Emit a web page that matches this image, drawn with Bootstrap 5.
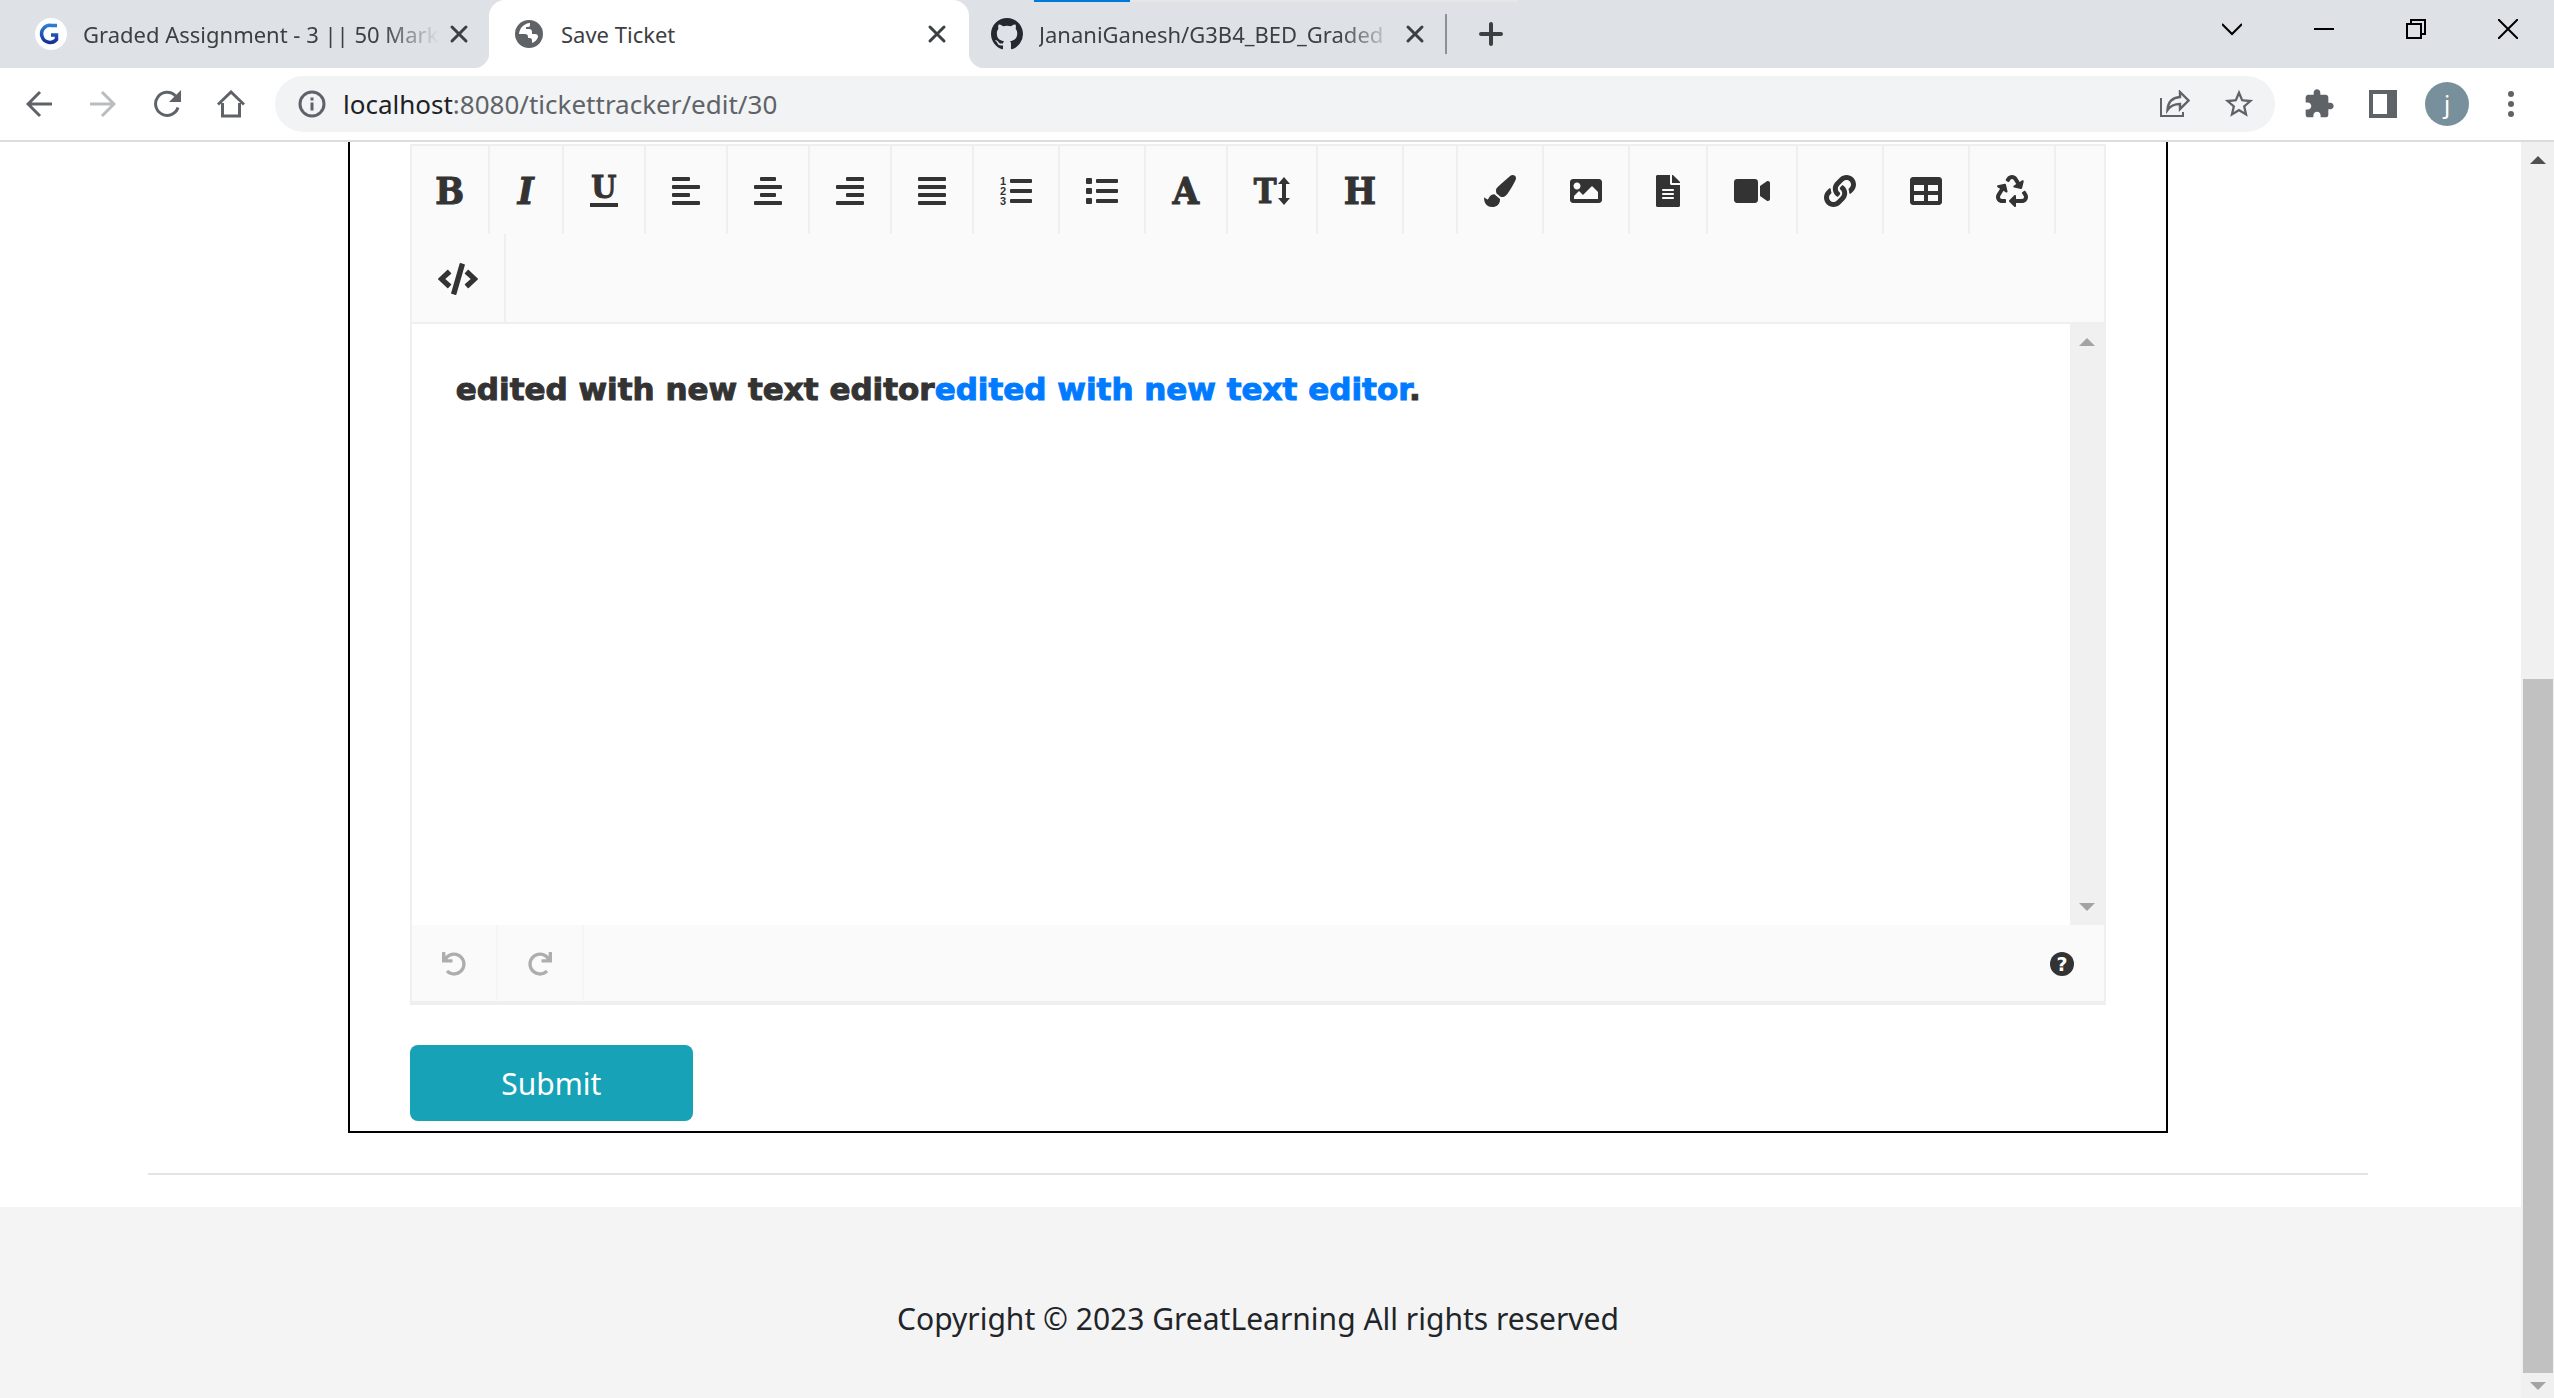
<!DOCTYPE html>
<html lang="en">
<head>
<meta charset="utf-8">
<meta name="viewport" content="width=device-width, initial-scale=1">
<title>Save Ticket</title>
<link href="https://cdn.jsdelivr.net/npm/bootstrap@5.3.0/dist/css/bootstrap.min.css" rel="stylesheet">
<style>
  body { font-family: "Noto Sans", "Open Sans", sans-serif; color: #212529; background: #fff; }
  svg { display: block; flex: none; }
  button { color: inherit; }
  .bare { border: 0; background: none; padding: 0; display: flex; align-items: center; justify-content: center; flex: none; }

  /* tab strip */
  .tab-strip { height: 68px; background: #dee1e6; padding-left: 11px; color: #3c4043; }
  .load-track { position: absolute; top: 0; left: 1034px; width: 484px; height: 2px; background: #e6e6e6; }
  .load-bar { width: 96px; height: 2px; background: #0078d7; }
  .win-tab { width: 478px; padding: 0 18px 0 24px; gap: 16px; font-size: 22px; line-height: 32px; position: relative; }
  .win-tab.current { width: 480px; margin-right: -2px; padding-right: 20px; background: #fff; border-radius: 16px 16px 0 0; }
  .win-tab.current::before, .win-tab.current::after { content: ""; position: absolute; bottom: 0; width: 16px; height: 16px; }
  .win-tab.current::before { left: -16px; background: radial-gradient(circle at 0 0, transparent 16px, #fff 17px); }
  .win-tab.current::after { right: -16px; background: radial-gradient(circle at 100% 0, transparent 16px, #fff 17px); }
  .tab-title { flex: 1 1 0; min-width: 0; overflow: hidden; white-space: nowrap; }
  .tab-title.faded { -webkit-mask-image: linear-gradient(to right, #000 calc(100% - 60px), transparent calc(100% - 4px)); mask-image: linear-gradient(to right, #000 calc(100% - 60px), transparent calc(100% - 4px)); }
  .tab-shut { width: 24px; height: 24px; margin-left: -12px; }
  .tab-rule { width: 2px; height: 40px; background: #8d9196; }
  .tab-plus { width: 88px; height: 68px; }
  .win-btn { width: 92px; height: 58px; color: #000; }

  /* address row */
  .address-row { height: 74px; padding: 8px 11px 8px 7px; border-bottom: 2px solid #dcdcdc; color: #5f6368; }
  .tool-cell { width: 64px; height: 56px; }
  .omnibox { height: 56px; margin: 0 12px; padding: 0 4px 0 23px; border-radius: 28px; background: #f1f3f4; }
  .omni-text { margin-left: 17px; font-size: 26px; line-height: 36px; color: #5f6368; }
  .omni-text b { font-weight: 400; color: #202124; }
  .avatar-dot { width: 44px; height: 44px; border-radius: 50%; background: #78909c; color: #fff; font-size: 24px; line-height: 32px; }

  /* page */
  .view { min-height: 0; }
  .sheet { min-width: 0; overflow: hidden; }
  .sheet-wrap { width: 100%; max-width: 2220px; margin: 0 auto; }
  .shifted { padding-right: 5px; }
  .ticket-frame { margin: 0 9%; border: 2px solid #000; border-top: 0; padding: 2px 60px 10px; }
  .sheet-rule { height: 2px; margin: 40px 0 32px; background: #e4e4e4; border: 0; opacity: 1; }
  .editor { border: 2px solid #efefef; border-bottom-width: 4px; color: #333; }
  .editor-tools { background: #fafafa; border-bottom: 2px solid #efefef; }
  .ed-btn { height: 88px; padding: 2px 26px 0; border-right: 2px solid #efefef; min-width: 54px; }
  .glyph { width: 28px; font: 700 38px/32px "DejaVu Serif Condensed", "DejaVu Serif", serif; text-align: center; display: flex; justify-content: center; -webkit-text-stroke: 1px currentColor; }
  .glyph.narrow { width: 24px; }
  .glyph.slant { width: 20px; font-style: italic; }
  .glyph.wide { width: 32px; }
  .glyph.lined { height: 32px; border-bottom: 4px solid #333; font-size: 32px; line-height: 24px; }
  .glyph.tall { width: 36px; justify-content: space-between; font-size: 34px; }
  .editor-body { height: 601px; background: #fff; }
  .editor-text { padding: 43px 44px; font: 700 31px/44px "DejaVu Sans", sans-serif; outline: 0; -webkit-text-stroke: 1px currentColor; }
  .editor-text a { color: #007bff; text-decoration: none; }
  .inner-scroll { width: 34px; background: #f0f0f0; padding: 14px 0; color: #a3a3a3; }
  .editor-foot { height: 76px; background: #fafafa; }
  .foot-btn { height: 76px; padding: 2px 30px 0; border-right: 2px solid #f6f6f6; color: #adadad; }
  .send-btn { width: 283px; height: 76px; margin-top: 40px; padding: 8px 12px 6px; border-radius: 8px; font-size: 30px; line-height: 44px; color: #fff; background: #17a2b8; border: 0; }
  .page-foot { background: #f4f4f4; padding-top: 90px; font-size: 30px; line-height: 44px; }

  /* window scroll bar */
  .outer-scroll { width: 33px; background: #f0f0f0; }
  .scroll-end { height: 25px; color: #a3a3a3; }
  .scroll-end.first { height: 35px; color: #505050; }
  .scroll-thumb { height: 58%; margin: 0 1px 0 2px; background: #c1c1c1; }
</style>
</head>
<body>
<div class="d-flex flex-column vh-100 overflow-hidden">

  <header class="flex-shrink-0">
    <div class="tab-strip d-flex align-items-stretch position-relative">
      <div class="load-track"><div class="load-bar"></div></div>
      <div class="win-tab d-flex align-items-center flex-shrink-0">
        <svg width="32" height="32" viewBox="0 0 32 32"><defs><linearGradient id="gl" x1="0" y1="0" x2="0" y2="1"><stop offset="0" stop-color="#2a7fd4"/><stop offset="1" stop-color="#15309a"/></linearGradient></defs><circle cx="16" cy="16" r="16" fill="#fff"/><path d="M22 7.500H16.500A8.500 8.500 0 1 0 21.500 21.500V17H16" fill="none" stroke="url(#gl)" stroke-width="3.500"/></svg>
        <span class="tab-title faded">Graded Assignment - 3 || 50 Mark</span>
        <button class="bare tab-shut" aria-label="Close tab"><svg width="20" height="20" viewBox="0 0 20 20"><path d="M3 3l14 14M17 3L3 17" stroke="currentColor" stroke-width="3" stroke-linecap="round"/></svg></button>
      </div>
      <div class="win-tab current d-flex align-items-center flex-shrink-0">
        <svg width="32" height="32" viewBox="0 0 32 32"><circle cx="16" cy="16" r="14" fill="#5f6368"/><path d="M17 5c-3 0-7 2-9 5-1 2-2 4-2 6h6c2 0 3 1 3 3v1h2c1 0 2 1 2 2v3c3-1 5-3 6-6 0-2-1-3-3-3h-3v-2c0-2-1-3-3-3h-3v-2h2c2 0 2-1 2-3z" fill="#fff"/></svg>
        <span class="tab-title">Save Ticket</span>
        <button class="bare tab-shut" aria-label="Close tab"><svg width="20" height="20" viewBox="0 0 20 20"><path d="M3 3l14 14M17 3L3 17" stroke="currentColor" stroke-width="3" stroke-linecap="round"/></svg></button>
      </div>
      <div class="win-tab d-flex align-items-center flex-shrink-0">
        <svg width="32" height="32" viewBox="0 0 16 16" fill="#24292f"><path d="M8 0C3.580 0 0 3.580 0 8c0 3.540 2.290 6.530 5.470 7.590.4.070.55-.17.55-.38 0-.19-.01-.82-.01-1.490-2.010.37-2.530-.49-2.690-.94-.09-.23-.48-.94-.82-1.130-.28-.15-.68-.52-.01-.53.63-.01 1.080.58 1.230.82.72 1.210 1.870.87 2.330.66.070-.52.28-.87.51-1.070-1.780-.2-3.640-.89-3.640-3.950 0-.87.31-1.590.82-2.150-.08-.2-.36-1.020.08-2.120 0 0 .67-.21 2.200.82.64-.18 1.320-.27 2-.27s1.360.09 2 .27c1.530-1.040 2.200-.82 2.200-.82.44 1.100.16 1.920.08 2.120.51.56.82 1.270.82 2.150 0 3.070-1.870 3.750-3.650 3.950.29.25.54.73.54 1.480 0 1.070-.01 1.930-.01 2.200 0 .21.15.46.55.38A8.010 8.010 0 0 0 16 8c0-4.420-3.580-8-8-8z"/></svg>
        <span class="tab-title faded">JananiGanesh/G3B4_BED_Graded</span>
        <button class="bare tab-shut" aria-label="Close tab"><svg width="20" height="20" viewBox="0 0 20 20"><path d="M3 3l14 14M17 3L3 17" stroke="currentColor" stroke-width="3" stroke-linecap="round"/></svg></button>
      </div>
      <span class="tab-rule align-self-center"></span>
      <button class="bare tab-plus" aria-label="New tab"><svg width="24" height="24" viewBox="0 0 24 24"><path d="M12 2v20M2 12h20" stroke="currentColor" stroke-width="4" stroke-linecap="round"/></svg></button>
      <div class="d-flex ms-auto">
        <button class="bare win-btn" aria-label="Search tabs"><svg width="20" height="20" viewBox="0 0 20 20"><path d="M0 5l10 10L20 5" fill="none" stroke="currentColor" stroke-width="2"/></svg></button>
        <button class="bare win-btn" aria-label="Minimize"><svg width="20" height="20" viewBox="0 0 20 20"><path d="M0 10h20" stroke="currentColor" stroke-width="2"/></svg></button>
        <button class="bare win-btn" aria-label="Restore"><svg width="20" height="20" viewBox="0 0 20 20"><path d="M1 5h14v14H1zM5 5V1h14v14h-4" fill="none" stroke="currentColor" stroke-width="2"/></svg></button>
        <button class="bare win-btn" aria-label="Close"><svg width="20" height="20" viewBox="0 0 20 20"><path d="M0 0l20 20M20 0L0 20" stroke="currentColor" stroke-width="2"/></svg></button>
      </div>
    </div>

    <nav class="address-row d-flex align-items-center">
      <button class="bare tool-cell" aria-label="Back"><svg width="26" height="28" viewBox="0 0 26 28"><path d="M26 14H3M14 2L2 14l12 12" fill="none" stroke="currentColor" stroke-width="3"/></svg></button>
      <button class="bare tool-cell" aria-label="Forward" disabled><svg width="26" height="28" viewBox="0 0 26 28" color="#babcbe"><path d="M0 14h23M12 2l12 12-12 12" fill="none" stroke="currentColor" stroke-width="3"/></svg></button>
      <button class="bare tool-cell" aria-label="Reload"><svg width="28" height="28" viewBox="0 0 28 28"><path d="M25 17.500A11.500 11.500 0 1 1 22.500 6" fill="none" stroke="currentColor" stroke-width="3"/><path d="M28 0v12H16z" fill="currentColor"/></svg></button>
      <button class="bare tool-cell" aria-label="Home"><svg width="28" height="28" viewBox="0 0 28 28"><path d="M1 14.500L14 2l13 12.500M5.500 13v13h17V13" fill="none" stroke="currentColor" stroke-width="3"/></svg></button>
      <div class="omnibox d-flex align-items-center flex-grow-1">
        <svg width="28" height="28" viewBox="0 0 28 28"><circle cx="14" cy="14" r="12" fill="none" stroke="currentColor" stroke-width="3"/><path d="M14 12.500v8M14 7.500v3" stroke="currentColor" stroke-width="3"/></svg>
        <span class="omni-text flex-grow-1"><b>localhost</b>:8080/tickettracker/edit/30</span>
        <button class="bare tool-cell" aria-label="Share"><svg width="30" height="28" viewBox="0 0 30 28"><path d="M1 8v18h22v-4" fill="none" stroke="currentColor" stroke-width="2"/><path d="M20 2l8.500 8.500L20 19v-5c-5 0-9 1-12.500 6 .5-8 5-12.500 12.500-13z" fill="none" stroke="currentColor" stroke-width="2.400"/></svg></button>
        <button class="bare tool-cell" aria-label="Bookmark"><svg width="34" height="34" viewBox="0 0 24 24" fill="currentColor"><path d="M22 9.240l-7.190-.62L12 2 9.190 8.630 2 9.240l5.460 4.730L5.820 21 12 17.270 18.180 21l-1.630-7.030L22 9.240zM12 15.400l-3.760 2.270 1-4.280-3.320-2.880 4.380-.38L12 6.100l1.710 4.040 4.380.38-3.320 2.880 1 4.280L12 15.400z"/></svg></button>
      </div>
      <button class="bare tool-cell" aria-label="Extensions"><svg width="32" height="32" viewBox="0 0 24 24" fill="currentColor"><path d="M20.500 11H19V7c0-1.100-.9-2-2-2h-4V3.500C13 2.120 11.880 1 10.500 1S8 2.120 8 3.500V5H4c-1.100 0-1.990.9-1.990 2v3.800H3.500c1.490 0 2.700 1.210 2.700 2.700s-1.210 2.700-2.700 2.700H2V20c0 1.100.9 2 2 2h3.800v-1.500c0-1.490 1.210-2.700 2.700-2.700 1.490 0 2.700 1.210 2.700 2.700V22H17c1.100 0 2-.9 2-2v-4h1.500c1.380 0 2.500-1.120 2.500-2.500S21.880 11 20.500 11z"/></svg></button>
      <button class="bare tool-cell" aria-label="Side panel"><svg width="28" height="28" viewBox="0 0 28 28"><path fill="currentColor" fill-rule="evenodd" d="M0 0h28v28H0zM4 4v20h14V4z"/></svg></button>
      <button class="bare tool-cell" aria-label="Profile"><span class="avatar-dot d-flex align-items-center justify-content-center">j</span></button>
      <button class="bare tool-cell" aria-label="Menu"><svg width="8" height="28" viewBox="0 0 8 28" fill="currentColor"><circle cx="4" cy="4" r="3"/><circle cx="4" cy="14" r="3"/><circle cx="4" cy="24" r="3"/></svg></button>
    </nav>
  </header>

  <div class="view d-flex flex-grow-1">
    <div class="sheet d-flex flex-column flex-grow-1">
      <main class="shifted">
        <div class="sheet-wrap">
          <form class="ticket-frame" onsubmit="return false">
            <div class="editor">
              <div class="editor-tools d-flex flex-wrap" role="toolbar" aria-label="Formatting">
                <button type="button" class="bare ed-btn" aria-label="Bold"><span class="glyph narrow">B</span></button>
                <button type="button" class="bare ed-btn" aria-label="Italic"><span class="glyph slant">I</span></button>
                <button type="button" class="bare ed-btn" aria-label="Underline"><span class="glyph lined">U</span></button>
                <button type="button" class="bare ed-btn" aria-label="Align left"><svg width="28" height="32" fill="currentColor"><rect y="2" width="18" height="4" rx="1"/><rect y="10" width="28" height="4" rx="1"/><rect y="18" width="18" height="4" rx="1"/><rect y="26" width="28" height="4" rx="1"/></svg></button>
                <button type="button" class="bare ed-btn" aria-label="Align center"><svg width="28" height="32" fill="currentColor"><rect x="6" y="2" width="16" height="4" rx="1"/><rect y="10" width="28" height="4" rx="1"/><rect x="6" y="18" width="16" height="4" rx="1"/><rect y="26" width="28" height="4" rx="1"/></svg></button>
                <button type="button" class="bare ed-btn" aria-label="Align right"><svg width="28" height="32" fill="currentColor"><rect x="10" y="2" width="18" height="4" rx="1"/><rect y="10" width="28" height="4" rx="1"/><rect x="10" y="18" width="18" height="4" rx="1"/><rect y="26" width="28" height="4" rx="1"/></svg></button>
                <button type="button" class="bare ed-btn" aria-label="Justify"><svg width="28" height="32" fill="currentColor"><rect y="2" width="28" height="4" rx="1"/><rect y="10" width="28" height="4" rx="1"/><rect y="18" width="28" height="4" rx="1"/><rect y="26" width="28" height="4" rx="1"/></svg></button>
                <button type="button" class="bare ed-btn" aria-label="Ordered list"><svg width="32" height="32" fill="currentColor"><g font-family="Liberation Sans, sans-serif" font-weight="700" font-size="11"><text x="0" y="10">1</text><text x="0" y="20">2</text><text x="0" y="30">3</text></g><rect x="10" y="4" width="22" height="4" rx="1"/><rect x="10" y="14" width="22" height="4" rx="1"/><rect x="10" y="24" width="22" height="4" rx="1"/></svg></button>
                <button type="button" class="bare ed-btn" aria-label="Unordered list"><svg width="32" height="32" fill="currentColor"><rect y="3" width="6" height="6" rx="1"/><rect y="13" width="6" height="6" rx="1"/><rect y="23" width="6" height="6" rx="1"/><rect x="10" y="4" width="22" height="4" rx="1"/><rect x="10" y="14" width="22" height="4" rx="1"/><rect x="10" y="24" width="22" height="4" rx="1"/></svg></button>
                <button type="button" class="bare ed-btn" aria-label="Font"><span class="glyph">A</span></button>
                <button type="button" class="bare ed-btn" aria-label="Font size"><span class="glyph tall">T<svg width="12" height="32" viewBox="0 0 12 32"><path fill="currentColor" d="M6 2l6 7H8v14h4l-6 7-6-7h4V9H0z"/></svg></span></button>
                <button type="button" class="bare ed-btn" aria-label="Heading"><span class="glyph wide">H</span></button>
                <button type="button" class="bare ed-btn" aria-label="Colors"></button>
                <button type="button" class="bare ed-btn" aria-label="Highlight"><svg width="32" height="32" viewBox="0 0 512 512" fill="currentColor"><path d="M167.020 309.340c-40.120 2.580-76.530 17.860-97.190 72.300-2.350 6.210-8 9.980-14.590 9.980-11.110 0-45.460-27.670-55.250-34.350C0 439.620 37.930 512 128 512c75.860 0 128-43.770 128-120.190 0-3.110-.65-6.080-.97-9.130l-88.010-73.340zM457.890 0c-15.160 0-29.370 6.710-40.210 16.450C213.270 199.050 192 203.340 192 257.090c0 13.700 3.250 26.760 8.730 38.700l63.820 53.180c7.210 1.800 14.640 3.030 22.390 3.030 62.110 0 98.110-45.470 211.160-256.460 7.380-14.350 13.900-29.850 13.900-45.990C512 20.640 486 0 457.890 0z"/></svg></button>
                <button type="button" class="bare ed-btn" aria-label="Image"><svg width="32" height="32" viewBox="0 0 512 512" fill="currentColor"><path d="M464 448H48c-26.510 0-48-21.490-48-48V112c0-26.510 21.490-48 48-48h416c26.510 0 48 21.490 48 48v288c0 26.510-21.490 48-48 48zM112 120c-30.928 0-56 25.072-56 56s25.072 56 56 56 56-25.072 56-56-25.072-56-56-56zM64 384h384V272l-87.515-87.515c-4.686-4.686-12.284-4.686-16.971 0L208 320l-55.515-55.515c-4.686-4.686-12.284-4.686-16.971 0L64 336v48z"/></svg></button>
                <button type="button" class="bare ed-btn" aria-label="File"><svg width="24" height="32" viewBox="0 0 384 512" fill="currentColor"><path d="M224 136V0H24C10.700 0 0 10.700 0 24v464c0 13.300 10.700 24 24 24h336c13.300 0 24-10.700 24-24V160H248c-13.200 0-24-10.800-24-24zm64 236c0 6.600-5.400 12-12 12H108c-6.600 0-12-5.400-12-12v-8c0-6.600 5.400-12 12-12h168c6.600 0 12 5.400 12 12v8zm0-64c0 6.600-5.400 12-12 12H108c-6.600 0-12-5.400-12-12v-8c0-6.600 5.400-12 12-12h168c6.600 0 12 5.400 12 12v8zm0-72v8c0 6.600-5.400 12-12 12H108c-6.600 0-12-5.400-12-12v-8c0-6.600 5.400-12 12-12h168c6.600 0 12 5.400 12 12zm96-114.100v6.100H256V0h6.100c6.400 0 12.500 2.500 17 7l97.900 98c4.500 4.500 7 10.600 7 16.900z"/></svg></button>
                <button type="button" class="bare ed-btn" aria-label="Video"><svg width="36" height="32" viewBox="0 0 576 512" fill="currentColor"><path d="M336.200 64H47.800C21.400 64 0 85.400 0 111.800v288.400C0 426.600 21.400 448 47.800 448h288.400c26.400 0 47.800-21.400 47.800-47.800V111.800c0-26.400-21.400-47.800-47.800-47.800zm189.400 37.700L416 177.300v157.400l109.600 75.500c21.200 14.600 50.400-.3 50.400-25.800V127.500c0-25.400-29.100-40.400-50.400-25.800z"/></svg></button>
                <button type="button" class="bare ed-btn" aria-label="Link"><svg width="32" height="32" viewBox="0 0 512 512" fill="currentColor"><path d="M326.612 185.391c59.747 59.809 58.927 155.698.36 214.590-.11.12-.24.25-.36.37l-67.200 67.200c-59.270 59.270-155.699 59.262-214.960 0-59.270-59.260-59.270-155.700 0-214.960l37.106-37.106c9.840-9.840 26.786-3.300 27.294 10.606.648 17.722 3.826 35.527 9.690 52.721 1.986 5.822.567 12.262-3.783 16.612l-13.087 13.087c-28.026 28.026-28.905 73.660-1.155 101.960 28.024 28.579 74.086 28.749 102.325.51l67.200-67.190c28.191-28.191 28.073-73.757 0-101.830-3.701-3.694-7.429-6.564-10.341-8.569a16.037 16.037 0 0 1-6.947-12.606c-.396-10.567 3.348-21.456 11.698-29.806l21.054-21.055c5.521-5.521 14.182-6.199 20.584-1.731a152.482 152.482 0 0 1 20.522 17.197zM467.547 44.449c-59.261-59.262-155.690-59.270-214.960 0l-67.200 67.200c-.12.12-.25.25-.36.37-58.566 58.892-59.387 154.781.36 214.590a152.454 152.454 0 0 0 20.521 17.196c6.402 4.468 15.064 3.789 20.584-1.731l21.054-21.055c8.350-8.350 12.094-19.239 11.698-29.806a16.037 16.037 0 0 0-6.947-12.606c-2.912-2.005-6.640-4.875-10.341-8.569-28.073-28.073-28.191-73.639 0-101.830l67.200-67.190c28.239-28.239 74.300-28.069 102.325.51 27.750 28.300 26.872 73.934-1.155 101.960l-13.087 13.087c-4.350 4.350-5.769 10.790-3.783 16.612 5.864 17.194 9.042 34.999 9.690 52.721.509 13.906 17.454 20.446 27.294 10.606l37.106-37.106c59.271-59.259 59.271-155.699.001-214.959z"/></svg></button>
                <button type="button" class="bare ed-btn" aria-label="Table"><svg width="32" height="32" viewBox="0 0 512 512" fill="currentColor"><path d="M464 32H48C21.490 32 0 53.490 0 80v352c0 26.510 21.490 48 48 48h416c26.510 0 48-21.490 48-48V80c0-26.510-21.490-48-48-48zM224 416H64v-96h160v96zm0-160H64v-96h160v96zm224 160H288v-96h160v96zm0-160H288v-96h160v96z"/></svg></button>
                <button type="button" class="bare ed-btn" aria-label="Remove styles"><svg width="32" height="32" viewBox="0 0 512 512" fill="currentColor"><path d="M184.561 261.903c3.232 13.997-12.123 24.635-24.068 17.168l-40.736-25.455-50.867 81.402C55.606 356.273 70.960 384 96.012 384H148c6.627 0 12 5.373 12 12v40c0 6.627-5.373 12-12 12H96.115c-75.334 0-121.302-83.048-81.408-146.880l50.822-81.388-40.725-25.448c-12.081-7.547-8.966-25.961 4.879-29.158l110.237-25.450c8.611-1.988 17.201 3.381 19.189 11.990l25.452 110.237zm98.561-182.915l41.289 66.076-40.740 25.457c-12.051 7.528-9 25.953 4.879 29.158l110.237 25.450c8.672 1.999 17.215-3.438 19.189-11.990l25.450-110.237c3.197-13.844-11.990-24.719-24.068-17.168l-40.687 25.424-41.263-66.082c-37.521-60.033-125.209-60.171-162.816 0l-17.963 28.766c-3.510 5.620-1.800 13.021 3.820 16.533l33.919 21.195c5.620 3.512 13.024 1.803 16.536-3.817l17.961-28.743c12.712-20.341 41.973-19.676 54.257-.022zM497.288 301.120l-27.515-44.065c-3.511-5.623-10.916-7.334-16.538-3.821l-33.861 21.159c-5.620 3.512-7.330 10.915-3.818 16.536l27.564 44.112c13.257 21.211-2.057 48.960-27.136 48.960H320V336.020c0-14.213-17.242-21.383-27.313-11.313l-80 79.981c-6.249 6.248-6.249 16.379 0 22.627l80 79.989C302.689 517.308 320 510.300 320 495.989V448h95.880c75.274 0 121.335-82.997 81.408-146.880z"/></svg></button>
                <button type="button" class="bare ed-btn" aria-label="Show code"><svg width="40" height="32" viewBox="0 0 640 512" fill="currentColor"><path d="M278.900 511.500l-61-17.700c-6.400-1.800-10-8.500-8.200-14.900L346.200 8.700c1.800-6.400 8.500-10 14.900-8.200l61 17.700c6.400 1.800 10 8.500 8.200 14.900L293.800 503.300c-1.900 6.400-8.500 10.100-14.900 8.200zm-114-112.200l43.500-46.400c4.600-4.900 4.300-12.700-.8-17.200L117 256l90.600-79.700c5.100-4.500 5.500-12.300.8-17.200l-43.500-46.400c-4.500-4.800-12.100-5.100-17-.5L3.800 247.200c-5.100 4.700-5.100 12.800 0 17.500l144.100 135.100c4.900 4.600 12.500 4.400 17-.5zm327.200.6l144.100-135.100c5.100-4.700 5.100-12.800 0-17.500L492.100 112.100c-4.800-4.500-12.400-4.300-17 .5L431.600 159c-4.600 4.900-4.300 12.700.8 17.200L523 256l-90.600 79.700c-5.100 4.500-5.500 12.300-.8 17.200l43.500 46.400c4.500 4.900 12.100 5.100 17 .6z"/></svg></button>
              </div>
              <div class="editor-body d-flex">
                <div class="editor-text flex-grow-1" contenteditable="true" role="textbox" aria-label="Ticket content" spellcheck="false">edited with new text editor<a href="#">edited with new text editor</a>.</div>
                <div class="inner-scroll d-flex flex-column align-items-center justify-content-between">
                  <svg width="16" height="8"><path d="M8 0l8 8H0z" fill="currentColor"/></svg>
                  <svg width="16" height="8"><path d="M0 0h16L8 8z" fill="currentColor"/></svg>
                </div>
              </div>
              <div class="editor-foot d-flex">
                <button type="button" class="bare foot-btn" aria-label="Undo"><svg width="24" height="24" viewBox="0 0 512 512" fill="currentColor"><path d="M212.333 224.333H12c-6.627 0-12-5.373-12-12V12C0 5.373 5.373 0 12 0h48c6.627 0 12 5.373 12 12v78.112C117.773 39.279 184.260 7.470 258.175 8.007c136.906.994 246.448 111.623 246.157 248.532C504.041 393.258 393.120 504 256.333 504c-64.089 0-122.496-24.313-166.510-64.215-5.099-4.622-5.334-12.554-.467-17.420l33.967-33.967c4.474-4.474 11.662-4.717 16.401-.525C170.760 415.336 211.580 432 256.333 432c97.268 0 176-78.716 176-176 0-97.267-78.716-176-176-176-58.496 0-110.280 28.476-142.274 72.333h98.274c6.627 0 12 5.373 12 12v48c0 6.627-5.373 12-12 12z"/></svg></button>
                <button type="button" class="bare foot-btn" aria-label="Redo"><svg width="24" height="24" viewBox="0 0 512 512" fill="currentColor"><path transform="matrix(-1 0 0 1 512 0)" d="M212.333 224.333H12c-6.627 0-12-5.373-12-12V12C0 5.373 5.373 0 12 0h48c6.627 0 12 5.373 12 12v78.112C117.773 39.279 184.260 7.470 258.175 8.007c136.906.994 246.448 111.623 246.157 248.532C504.041 393.258 393.120 504 256.333 504c-64.089 0-122.496-24.313-166.510-64.215-5.099-4.622-5.334-12.554-.467-17.420l33.967-33.967c4.474-4.474 11.662-4.717 16.401-.525C170.760 415.336 211.580 432 256.333 432c97.268 0 176-78.716 176-176 0-97.267-78.716-176-176-176-58.496 0-110.280 28.476-142.274 72.333h98.274c6.627 0 12 5.373 12 12v48c0 6.627-5.373 12-12 12z"/></svg></button>
                <button type="button" class="bare foot-btn ms-auto border-0 text-reset" aria-label="Help"><svg width="24" height="24" viewBox="0 0 24 24"><circle cx="12" cy="12" r="12" fill="currentColor"/><text x="12" y="19" text-anchor="middle" font-family="DejaVu Sans, sans-serif" font-weight="700" font-size="19" fill="#fff">?</text></svg></button>
              </div>
            </div>
            <button type="submit" class="btn send-btn">Submit</button>
          </form>
          <hr class="sheet-rule">
        </div>
      </main>
      <footer class="page-foot shifted flex-grow-1 text-center">Copyright © 2023 GreatLearning All rights reserved</footer>
    </div>
    <div class="outer-scroll d-flex flex-column flex-shrink-0">
      <div class="scroll-end first d-flex align-items-center justify-content-center"><svg width="16" height="8"><path d="M8 0l8 8H0z" fill="currentColor"/></svg></div>
      <div class="flex-grow-1 d-flex flex-column justify-content-end"><div class="scroll-thumb"></div></div>
      <div class="scroll-end d-flex align-items-center justify-content-center"><svg width="16" height="8"><path d="M0 0h16L8 8z" fill="currentColor"/></svg></div>
    </div>
  </div>
</div>
<script src="https://cdn.jsdelivr.net/npm/bootstrap@5.3.0/dist/js/bootstrap.bundle.min.js"></script>
</body>
</html>
